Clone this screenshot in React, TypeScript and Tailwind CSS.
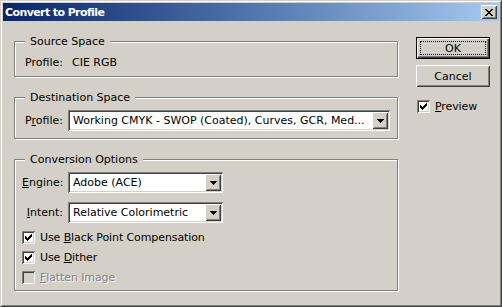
import React from "react";

const FONT = "font-['Tahoma','DejaVu_Sans',sans-serif]";

// classic win32 3D edges
const RAISED =
  "shadow-[inset_1px_1px_#fff,inset_-1px_-1px_#404040,inset_2px_2px_#d4d0c8,inset_-2px_-2px_#808080]";
const SUNKEN =
  "shadow-[inset_1px_1px_#808080,inset_-1px_-1px_#fff,inset_2px_2px_#404040,inset_-2px_-2px_#d4d0c8]";

const CloseGlyph = () => (
  <svg width="8" height="7" viewBox="0 0 8 7" shapeRendering="crispEdges">
    <path
      d="M0 0h2v1h-2zM6 0h2v1h-2zM1 1h2v1h-2zM5 1h2v1h-2zM2 2h4v1h-4zM3 3h2v1h-2zM2 4h4v1h-4zM1 5h2v1h-2zM5 5h2v1h-2zM0 6h2v1h-2zM6 6h2v1h-2z"
      fill="#000"
    />
  </svg>
);

const CheckGlyph = ({ color = "#000" }: { color?: string }) => (
  <svg width="7" height="7" viewBox="0 0 7 7" shapeRendering="crispEdges">
    <path
      d="M0 2h1v3h-1zM1 3h1v3h-1zM2 4h1v3h-1zM3 3h1v3h-1zM4 2h1v3h-1zM5 1h1v3h-1zM6 0h1v3h-1z"
      fill={color}
    />
  </svg>
);

const Arrow = () => (
  <svg width="7" height="4" viewBox="0 0 7 4" shapeRendering="crispEdges">
    <path d="M0 0h7v1h-7zM1 1h5v1h-5zM2 2h3v1h-3zM3 3h1v1h-1z" fill="#000" />
  </svg>
);

// label with one underlined access key
const Mnemonic = ({ text, at }: { text: string; at: number }) => (
  <>
    {text.slice(0, at)}
    <u className="underline-offset-[1px]">{text[at]}</u>
    {text.slice(at + 1)}
  </>
);

const Combo = ({ value, width }: { value: string; width: string }) => (
  <div className={`${width} h-[21px] bg-white p-[2px] flex ${SUNKEN}`}>
    <div className="flex-1 pl-[3px] leading-[17px] whitespace-nowrap overflow-hidden">{value}</div>
    <div className={`w-[16px] h-[17px] bg-[#d4d0c8] flex items-center justify-center ${RAISED}`}>
      <Arrow />
    </div>
  </div>
);

const Checkbox = ({
  label,
  checked,
  disabled,
}: {
  label: React.ReactNode;
  checked?: boolean;
  disabled?: boolean;
}) => (
  <div className="flex items-center h-[13px]">
    <div
      className={`w-[13px] h-[13px] flex items-center justify-center ${SUNKEN} ${
        disabled ? "bg-[#d4d0c8]" : "bg-white"
      }`}
    >
      {checked && <CheckGlyph />}
    </div>
    <span
      className={`ml-[5px] leading-[13px] whitespace-nowrap tracking-[-0.1px] ${
        disabled ? "text-[#808080] [text-shadow:1px_1px_#fff]" : ""
      }`}
    >
      {label}
    </span>
  </div>
);

const Group = ({
  title,
  height,
  className = "",
  children,
}: {
  title: string;
  height: string;
  className?: string;
  children: React.ReactNode;
}) => (
  <div
    className={`relative w-[384px] ${height} border border-[#808080] shadow-[inset_1px_1px_#fff,1px_1px_#fff] ${className}`}
  >
    {/* legend sits over the etched line */}
    <div className="absolute left-[10px] top-[-7px] px-[5px] bg-[#d4d0c8] leading-[13px]">{title}</div>
    {children}
  </div>
);

const RowLabel = ({ children }: { children: React.ReactNode }) => (
  <span className="w-[41px] text-right whitespace-nowrap leading-[13px]">{children}</span>
);

export default function App() {
  return (
    <div
      className={`w-[502px] h-[307px] bg-[#d4d0c8] text-[11px] text-black ${FONT} border border-t-[#d4d0c8] border-l-[#d4d0c8] border-r-[#404040] border-b-[#404040]`}
    >
      <div className="h-full flex flex-col p-px border border-t-white border-l-white border-r-[#808080] border-b-[#808080]">
        {/* title bar */}
        <div className="h-[18px] flex items-center bg-gradient-to-r from-[#0a246a] to-[#a6caf0] pl-[2px] pr-[2px]">
          <span className="flex-1 font-bold text-white leading-[13px] tracking-[-0.6px]">Convert to Profile</span>
          <div className={`w-[16px] h-[14px] bg-[#d4d0c8] flex items-center justify-center ${RAISED}`}>
            <CloseGlyph />
          </div>
        </div>

        <div className="flex pl-[11px]">
          {/* left column */}
          <div className="flex flex-col pt-[20px]">
            <Group title="Source Space" height="h-[36px]">
              <div className="flex pl-[7px] pt-[14px]">
                <RowLabel>Profile:</RowLabel>
                <span className="ml-[9px] leading-[13px]">CIE RGB</span>
              </div>
            </Group>

            <Group title="Destination Space" height="h-[42px]" className="mt-[20px]">
              <div className="flex items-center pl-[7px] pt-[12px]">
                <RowLabel>
                  <Mnemonic text="Profile:" at={1} />
                </RowLabel>
                <div className="ml-[5px]">
                  <Combo value="Working CMYK - SWOP (Coated), Curves, GCR, Med..." width="w-[322px]" />
                </div>
              </div>
            </Group>

            <Group title="Conversion Options" height="h-[132px]" className="mt-[20px]">
              <div className="flex flex-col pt-[12px]">
                <div className="flex items-center pl-[7px]">
                  <RowLabel>
                    <Mnemonic text="Engine:" at={0} />
                  </RowLabel>
                  <div className="ml-[5px]">
                    <Combo value="Adobe (ACE)" width="w-[155px]" />
                  </div>
                </div>
                <div className="flex items-center pl-[7px] mt-[9px]">
                  <RowLabel>
                    <Mnemonic text="Intent:" at={0} />
                  </RowLabel>
                  <div className="ml-[5px]">
                    <Combo value="Relative Colorimetric" width="w-[155px]" />
                  </div>
                </div>
                <div className="flex flex-col gap-[7px] pl-[7px] mt-[8px]">
                  <Checkbox checked label={<Mnemonic text="Use Black Point Compensation" at={4} />} />
                  <Checkbox checked label={<Mnemonic text="Use Dither" at={4} />} />
                  <Checkbox disabled label={<Mnemonic text="Flatten Image" at={0} />} />
                </div>
              </div>
            </Group>
          </div>

          {/* right column */}
          <div className="flex flex-col ml-[18px] pt-[16px]">
            <div className="w-[74px] h-[22px] border border-black bg-[#d4d0c8] shadow-[inset_1px_1px_#fff,inset_-1px_-1px_#404040,inset_-2px_-2px_#808080] p-[3px]">
              <div className="h-full border border-dotted border-black flex items-center justify-center leading-[13px]">
                OK
              </div>
            </div>
            <div className={`w-[74px] h-[22px] mt-[6px] flex items-center justify-center leading-[13px] ${RAISED}`}>
              Cancel
            </div>
            <div className="mt-[13px] ml-px">
              <Checkbox checked label={<Mnemonic text="Preview" at={0} />} />
            </div>
          </div>
        </div>
      </div>
    </div>
  );
}
